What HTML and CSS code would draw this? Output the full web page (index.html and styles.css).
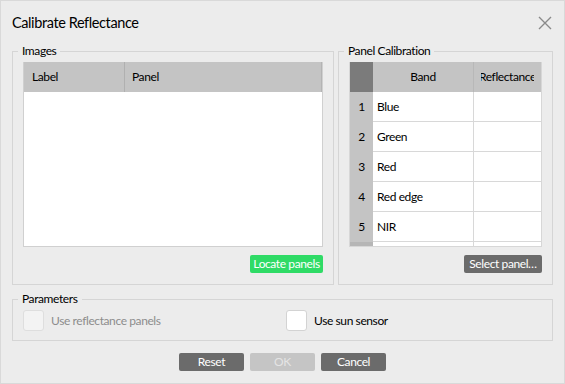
FILE: index.html
```html
<!DOCTYPE html>
<html lang="en">
<head>
<meta charset="utf-8">
<title>Calibrate Reflectance</title>
<link rel="stylesheet" href="styles.css">
</head>
<body>
<div class="dialog">
  <header class="titlebar">
    <h1 class="title">Calibrate Reflectance</h1>
    <button class="close" aria-label="Close">
      <svg width="14" height="14" viewBox="0 0 14 14"><path d="M1 1 L13 13 M13 1 L1 13" stroke="#8a8a8a" stroke-width="1.4" fill="none"/></svg>
    </button>
  </header>

  <div class="groups">
    <fieldset class="group images">
      <legend>Images</legend>
      <div class="images-grid">
        <div class="ig-head">
          <div class="ig-h ig-label">Label</div>
          <div class="ig-h ig-panel">Panel</div>
        </div>
      </div>
      <div class="actions"><button class="btn btn-green">Locate panels</button></div>
    </fieldset>

    <fieldset class="group panel">
      <legend>Panel Calibration</legend>
      <div class="band-grid">
        <div class="bg-row bg-head">
          <div class="vh corner"></div>
          <div class="c band"><span>Band</span></div>
          <div class="c refl"><div class="clip"><span>Reflectance</span></div></div>
        </div>
        <div class="bg-row"><div class="vh">1</div><div class="c band">Blue</div><div class="c refl"></div></div>
        <div class="bg-row"><div class="vh">2</div><div class="c band">Green</div><div class="c refl"></div></div>
        <div class="bg-row"><div class="vh">3</div><div class="c band">Red</div><div class="c refl"></div></div>
        <div class="bg-row"><div class="vh">4</div><div class="c band">Red edge</div><div class="c refl"></div></div>
        <div class="bg-row"><div class="vh">5</div><div class="c band">NIR</div><div class="c refl"></div></div>
        <div class="bg-row bg-partial"><div class="vh"></div><div class="c band"></div><div class="c refl"></div></div>
      </div>
      <div class="actions"><button class="btn btn-dark">Select panel…</button></div>
    </fieldset>
  </div>

  <fieldset class="group params">
    <legend>Parameters</legend>
    <div class="checks">
      <label class="check disabled"><span class="box"></span>Use reflectance panels</label>
      <label class="check"><span class="box"></span>Use sun sensor</label>
    </div>
  </fieldset>

  <div class="footer">
    <button class="btn btn-dark fbtn">Reset</button>
    <button class="btn btn-off fbtn">OK</button>
    <button class="btn btn-dark fbtn">Cancel</button>
  </div>
</div>
</body>
</html>
```

FILE: styles.css
```css
* { box-sizing: border-box; }

html, body {
  margin: 0;
  padding: 0;
  background: #ececec;
}

body {
  font-family: Lato, "Liberation Sans", sans-serif;
  font-size: 12px;
  letter-spacing: -0.4px;
  color: #000;
}

.dialog {
  width: 565px;
  height: 384px;
  border: 1px solid #d9d9d9;
  background: #ececec;
  display: flex;
  flex-direction: column;
  overflow: hidden;
}

.titlebar {
  height: 43px;
  display: flex;
  justify-content: space-between;
  align-items: flex-start;
  padding: 12px 12px 0 11px;
}

.title {
  margin: 0;
  font-weight: normal;
  font-size: 14.5px;
  letter-spacing: -0.4px;
  line-height: 20px;
}

.close {
  border: 0;
  background: none;
  padding: 0;
  margin-top: 3px;
  width: 14px;
  height: 14px;
  display: block;
}
.close svg { display: block; }

.groups {
  display: flex;
  gap: 4px;
  padding: 0 11px;
  height: 241px;
}

.group {
  margin: 0;
  border: 1px solid #d5d5d5;
  padding: 4px 10px 10px;
  min-width: 0;
}

.group legend {
  padding: 0 4px;
  margin-left: -5px;
  line-height: 14px;
  font-size: 12px;
}

.images, .panel {
  display: flex;
  flex-direction: column;
}

.images { width: 322px; }
.panel { width: 215px; }

.images-grid {
  height: 185px;
  background: #fff;
  border: 1px solid #d0d0d0;
  border-top: 0;
}

.ig-head {
  display: flex;
  height: 30px;
  background: #c4c4c4;
  border-right: 1px solid #b4b4b4;
}

.ig-h {
  padding-left: 8px;
  line-height: 30px;
}
.ig-label { width: 100px; }
.ig-panel { flex: 1; border-left: 1px solid #b0b0b0; padding-left: 7px; }

.actions {
  margin-top: 8px;
  display: flex;
  justify-content: flex-end;
}

.btn {
  font-family: inherit;
  font-size: 12px;
  letter-spacing: -0.4px;
  height: 18px;
  line-height: 18px;
  padding: 0;
  border: 0;
  border-radius: 2px;
  color: #fff;
  white-space: nowrap;
  text-align: center;
}

.btn-green { background: #2fdb66; width: 73px; }
.btn-dark { background: #6b6b6b; }
.panel .btn-dark { width: 78px; }
.btn-off { background: #c5c5c5; color: #e4e4e4; }

.band-grid {
  height: 185px;
  background: #fff;
  border: 1px solid #d7d7d7;
  border-top: 0;
  overflow: hidden;
}

.bg-row {
  display: flex;
  height: 30px;
  border-bottom: 1px solid #d8d8d8;
}

.bg-head {
  height: 30px;
  border-bottom: 0;
  background: #c4c4c4;
}

.vh {
  width: 23px;
  flex: none;
  background: #c4c4c4;
  text-align: center;
  line-height: 29px;
  margin-bottom: -1px;
}

.corner { background: #7b7b7b; margin-bottom: 0; }

.bg-partial .vh { background: #b6b6b6; }

.c {
  line-height: 29px;
  overflow: hidden;
  white-space: nowrap;
}

.band {
  width: 100px;
  flex: none;
  padding-left: 4px;
}

.refl {
  flex: 1;
  border-left: 1px solid #d8d8d8;
}

.bg-head .c {
  display: flex;
  justify-content: center;
  padding-left: 0;
  line-height: 30px;
}
.bg-head .refl { border-left-color: #b8b8b8; padding: 0 7px; }
.bg-head .c span { flex: none; }

.clip {
  flex: 1;
  min-width: 0;
  overflow: hidden;
  display: flex;
  justify-content: center;
}

.params {
  margin: 7px 11px 0;
  padding: 4px 10px 9px;
  display: block;
}

.checks {
  display: grid;
  grid-template-columns: 263px 1fr;
}

.check {
  display: flex;
  align-items: center;
  gap: 7px;
  height: 21px;
}

.box {
  width: 21px;
  height: 21px;
  border: 1px solid #d3d3d3;
  border-radius: 3px;
  background: #fff;
}

.check.disabled { color: #8c8c8c; }
.check.disabled .box { background: #f3f3f3; border-color: #dedede; }

.footer {
  margin-top: 12px;
  display: flex;
  justify-content: center;
  gap: 6px;
}

.fbtn { width: 65px; }
```
